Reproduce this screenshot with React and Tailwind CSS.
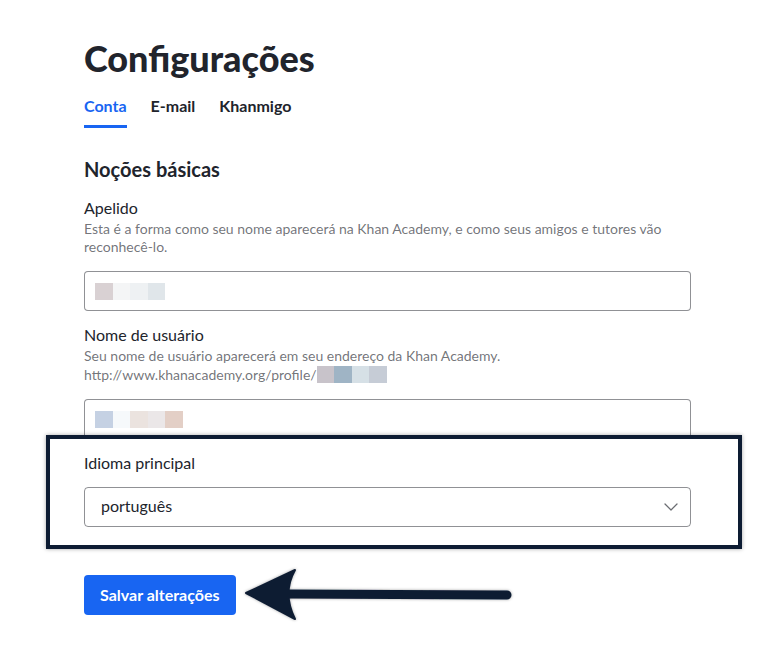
import { ChevronDown } from 'lucide-react'

const muted = 'text-[rgba(33,36,44,0.64)]'

function Blur({ colors, className = '' }) {
  // pixelated placeholder for hidden personal data
  return (
    <span className={`inline-flex align-middle ${className}`}>
      {colors.map((c, i) => (
        <span key={i} className="inline-block h-[17px] w-[17.5px]" style={{ background: c }} />
      ))}
    </span>
  )
}

function Field({ children }) {
  return (
    <div className="flex h-[40px] items-center rounded-[4px] border border-[rgba(33,36,44,0.5)] bg-white px-[10px]">
      {children}
    </div>
  )
}

export default function App() {
  return (
    <div className="relative min-h-[651px] bg-white font-['Lato',sans-serif] text-[#21242c]">
      <div className="ml-[84px] w-[607px] pt-[38px]">
        <h1 className="text-[36px] font-black leading-[40px]">Configurações</h1>

        {/* Tabs */}
        <div className="mt-[18px] flex gap-6 text-[16px] font-bold leading-[20px]">
          <span className="border-b-[3px] border-[#1865f2] pb-[9px] text-[#1865f2]">Conta</span>
          <span className="pb-[12px]">E-mail</span>
          <span className="pb-[12px]">Khanmigo</span>
        </div>

        <h2 className="mt-[29px] text-[20px] font-bold leading-[24px]">Noções básicas</h2>

        <div className="mt-[17px] text-[16px] leading-[20px]">Apelido</div>
        <p className={`mt-[2px] text-[14px] leading-[18px] ${muted}`}>
          Esta é a forma como seu nome aparecerá na Khan Academy, e como seus amigos e tutores vão reconhecê-lo.
        </p>
        <div className="mt-[15px]">
          <Field>
            <Blur colors={['#d9d1d3', '#f4f5f6', '#eef1f3', '#e0e6ea']} />
          </Field>
        </div>

        <div className="mt-[14px] text-[16px] leading-[20px]">Nome de usuário</div>
        <p className={`mt-[2px] text-[14px] leading-[18.5px] ${muted}`}>
          Seu nome de usuário aparecerá em seu endereço da Khan Academy.
          <br />
          http://www.khanacademy.org/profile/
          <Blur colors={['#c8c3ca', '#9fb4c5', '#d6e0e6', '#c6ccd6']} className="-mt-[3px]" />
        </p>
        <div className="mt-[15px]">
          <Field>
            <Blur colors={['#c5d1e3', '#f6f9fb', '#ebe3df', '#ebe7e8', '#e3cfc6']} />
          </Field>
        </div>

        <div className="mt-[14px] text-[16px] leading-[20px]">Idioma principal</div>
        <div className="mt-[14px] flex h-[40px] items-center justify-between rounded-[4px] border border-[rgba(33,36,44,0.5)] pl-[16px] pr-[7px] text-[16px]">
          <span className="-mt-[2px]">português</span>
          <ChevronDown size={24} strokeWidth={1.25} className="text-[#6b6d72]" />
        </div>

        <button className="mt-[48px] h-[40px] rounded-[4px] bg-[#1865f2] px-4 text-[16px] font-bold text-white">
          Salvar alterações
        </button>
      </div>

      {/* annotation overlay */}
      <div className="pointer-events-none absolute left-[46px] top-[435px] h-[114px] w-[696px] border-[4px] border-[#0d1c33] shadow-[0_0_4px_rgba(0,0,0,0.35)]" />
      <svg
        className="pointer-events-none absolute left-[240px] top-[565px]"
        width="280"
        height="60"
        viewBox="0 0 280 60"
      >
        <defs>
          <filter id="sh" x="-10%" y="-30%" width="120%" height="160%">
            <feDropShadow dx="0" dy="0" stdDeviation="1.5" floodColor="#000" floodOpacity="0.35" />
          </filter>
        </defs>
        <g filter="url(#sh)" fill="#0d1c33" stroke="#0d1c33">
          <line x1="44" y1="29" x2="267" y2="30" strokeWidth="9" strokeLinecap="round" />
          <path d="M6 28 L55 5 Q42 28 55 54 Z" strokeWidth="2" strokeLinejoin="round" />
        </g>
      </svg>
    </div>
  )
}
